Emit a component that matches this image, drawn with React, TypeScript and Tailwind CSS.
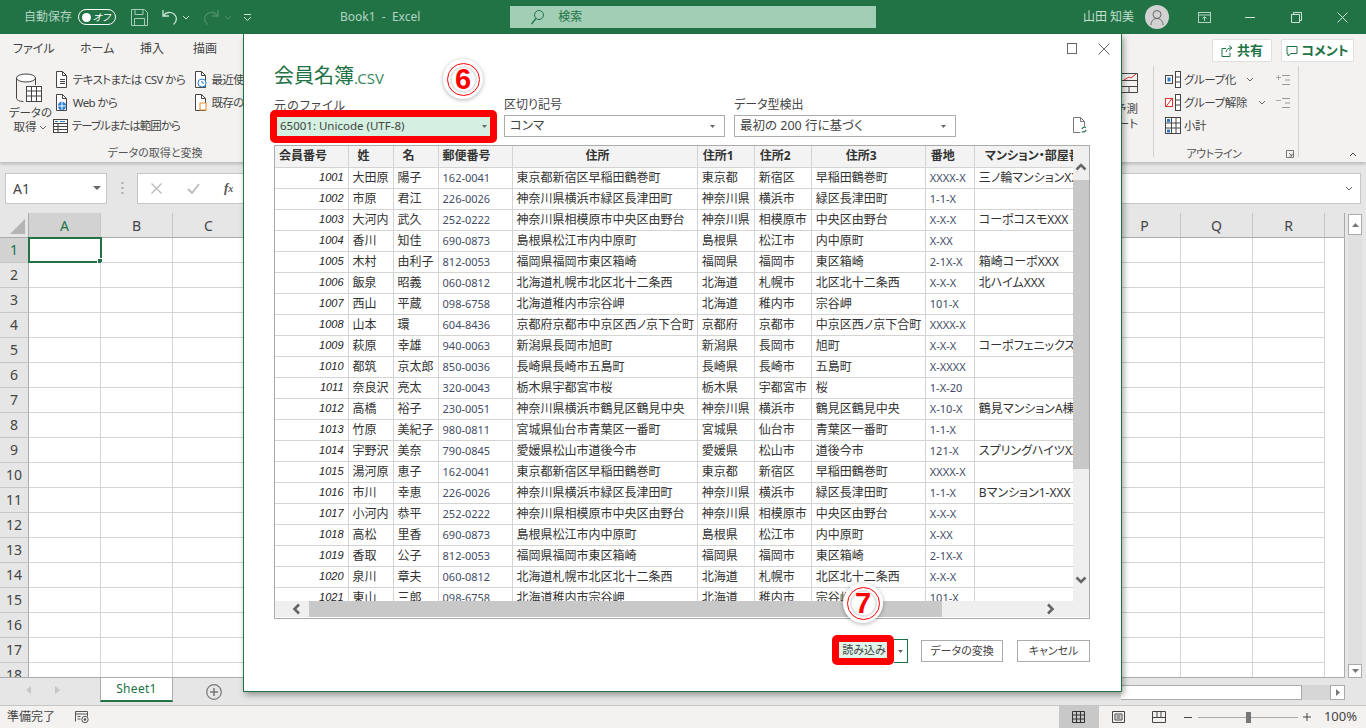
import React from "react";

const rows: string[][] = [
  ["1001","大田原","陽子","162-0041","東京都新宿区早稲田鶴巻町","東京都","新宿区","早稲田鶴巻町","XXXX-X","三ノ輪マンションXXX"],
  ["1002","市原","君江","226-0026","神奈川県横浜市緑区長津田町","神奈川県","横浜市","緑区長津田町","1-1-X",""],
  ["1003","大河内","武久","252-0222","神奈川県相模原市中央区由野台","神奈川県","相模原市","中央区由野台","X-X-X","コーポコスモXXX"],
  ["1004","香川","知佳","690-0873","島根県松江市内中原町","島根県","松江市","内中原町","X-XX",""],
  ["1005","木村","由利子","812-0053","福岡県福岡市東区箱崎","福岡県","福岡市","東区箱崎","2-1X-X","箱崎コーポXXX"],
  ["1006","飯泉","昭義","060-0812","北海道札幌市北区北十二条西","北海道","札幌市","北区北十二条西","X-X-X","北ハイムXXX"],
  ["1007","西山","平蔵","098-6758","北海道稚内市宗谷岬","北海道","稚内市","宗谷岬","101-X",""],
  ["1008","山本","環","604-8436","京都府京都市中京区西ノ京下合町","京都府","京都市","中京区西ノ京下合町","XXXX-X",""],
  ["1009","萩原","幸雄","940-0063","新潟県長岡市旭町","新潟県","長岡市","旭町","X-X-X","コーポフェニックスXX"],
  ["1010","都筑","京太郎","850-0036","長崎県長崎市五島町","長崎県","長崎市","五島町","X-XXXX",""],
  ["1011","奈良沢","亮太","320-0043","栃木県宇都宮市桜","栃木県","宇都宮市","桜","1-X-20",""],
  ["1012","高橋","裕子","230-0051","神奈川県横浜市鶴見区鶴見中央","神奈川県","横浜市","鶴見区鶴見中央","X-10-X","鶴見マンションA棟XX"],
  ["1013","竹原","美紀子","980-0811","宮城県仙台市青葉区一番町","宮城県","仙台市","青葉区一番町","1-1-X",""],
  ["1014","宇野沢","美奈","790-0845","愛媛県松山市道後今市","愛媛県","松山市","道後今市","121-X","スプリングハイツXX"],
  ["1015","湯河原","恵子","162-0041","東京都新宿区早稲田鶴巻町","東京都","新宿区","早稲田鶴巻町","XXXX-X",""],
  ["1016","市川","幸恵","226-0026","神奈川県横浜市緑区長津田町","神奈川県","横浜市","緑区長津田町","1-1-X","Bマンション1-XXX"],
  ["1017","小河内","恭平","252-0222","神奈川県相模原市中央区由野台","神奈川県","相模原市","中央区由野台","X-X-X",""],
  ["1018","高松","里香","690-0873","島根県松江市内中原町","島根県","松江市","内中原町","X-XX",""],
  ["1019","香取","公子","812-0053","福岡県福岡市東区箱崎","福岡県","福岡市","東区箱崎","2-1X-X",""],
  ["1020","泉川","章夫","060-0812","北海道札幌市北区北十二条西","北海道","札幌市","北区北十二条西","X-X-X",""],
  ["1021","東山","三郎","098-6758","北海道稚内市宗谷岬","北海道","稚内市","宗谷岬","101-X",""],
];
const heads = ["会員番号","姓","名","郵便番号","住所","住所1","住所2","住所3","番地","マンション・部屋番号"];
const headAlign = ["pl-[4px]","pl-[9px]","pl-[9px]","pl-[4px]","pl-[73px]","pl-[5px]","pl-[5px]","pl-[34px]","pl-[5px]","pl-[10px]"];
const colW = [73,45,45,74,185,57,57,114,49,100];
const letters = "ABCDEFGHIJKLMNOPQR".split("");

const Svg = ({ w, h, children, className }: { w: number; h: number; children: React.ReactNode; className?: string }) => (
  <svg width={w} height={h} viewBox={`0 0 ${w} ${h}`} fill="none" className={`shrink-0 ${className ?? ""}`}>{children}</svg>
);
const Chev = ({ c = "#666", dir = "down" }: { c?: string; dir?: string }) => (
  <Svg w={8} h={5}><path d={dir === "down" ? "M1 1l3 3 3-3" : "M1 4l3-3 3 3"} stroke={c} /></Svg>
);
const Tri = ({ c = "#666", w = 7, h = 4 }: { c?: string; w?: number; h?: number }) => (
  <Svg w={w} h={h}><path d={`M0 0h${w}L${w / 2} ${h}z`} fill={c} /></Svg>
);

const DocIcon = ({ children }: { children?: React.ReactNode }) => (
  <Svg w={15} h={17}>
    <path d="M1.5.5h6l4 4v12h-10z" stroke="#444" fill="#fff" />
    <path d="M7.5.5v4h4" stroke="#444" />
    {children}
  </Svg>
);

const GroupIcon = ({ kind }: { kind: "add" | "del" | "sub" }) => (
  <Svg w={16} h={17}>
    {kind !== "sub" && <rect x="0.5" y="4.5" width="7" height="8" stroke={kind === "del" ? "#e03030" : "#444"} fill="#fff" />}
    {kind !== "sub" && <rect x="10.5" y="0.5" width="5" height="16" stroke="#444" fill="#fff" />}
    {kind !== "sub" && <path d="M10.5 6h5M10.5 11h5" stroke="#444" />}
    {kind === "add" && <rect x="2.5" y="6.5" width="3" height="4" fill="#2b7cd3" />}
    {kind === "del" && <path d="M1.5 12l5-7" stroke="#e03030" />}
    {kind === "sub" && (
      <>
        <rect x="0.5" y="0.5" width="15" height="16" stroke="#444" fill="#fff" />
        <path d="M0.5 6h15M0.5 11h15M6.5.5v16M11 .5v16" stroke="#444" />
        <rect x="2" y="2" width="3" height="3" fill="#2b7cd3" />
        <rect x="2" y="12.5" width="3" height="3" fill="#2b7cd3" />
      </>
    )}
  </Svg>
);

const OutlineIcon = ({ plus }: { plus: boolean }) => (
  <Svg w={14} h={12}>
    <path d={plus ? "M0 3.5h5M2.5 1v5" : "M0 3.5h5"} stroke="#aaa" />
    <path d="M6 1.5h8M9 6h5M6 10.5h8" stroke="#999" />
  </Svg>
);

const Select = ({ text, w }: { text: string; w: number }) => (
  <div style={{ width: w }} className="h-[22px] border border-[#ababab] bg-white flex items-center justify-between pl-[5px] pr-[9px] text-[12.5px] text-[#444]">
    <span>{text}</span>
    <Tri w={5} h={3} />
  </div>
);

const Badge = ({ n, className }: { n: string; className: string }) => (
  <div className={`absolute w-[40px] h-[40px] rounded-full bg-white shadow-[0_1px_4px_rgba(0,0,0,0.3)] flex items-center justify-center ${className}`}>
    <div className="w-[33px] h-[33px] rounded-full border border-[#f00] flex items-center justify-center">
      <div className="w-[27px] h-[27px] rounded-full border-[2px] border-[#e4e4e4] flex items-center justify-center">
        <span className="font-['Liberation_Sans',sans-serif] font-bold text-[29px] leading-none text-[#f00]">{n}</span>
      </div>
    </div>
  </div>
);

const Table = () => (
  <div className="border border-[#ababab] h-[474px] flex flex-col bg-white">
    <div className="flex h-[455px]">
      <div className="w-[798px] overflow-hidden">
        <table className="table-fixed border-collapse w-[800px] text-[12px] text-[#333]">
          <colgroup>{colW.map((w, i) => <col key={i} style={{ width: w }} />)}</colgroup>
          <thead>
            <tr className="h-[21px] bg-[#f3f3f3]">
              {heads.map((h, i) => (
                <th key={i} className={`border border-[#d4d4d4] border-t-0 first:border-l-0 font-bold p-0 text-left whitespace-nowrap overflow-hidden text-[#333] leading-none ${headAlign[i]}`}>{h}</th>
              ))}
            </tr>
          </thead>
          <tbody>
            {rows.map((r) => (
              <tr key={r[0]} className="h-[21px]">
                {r.map((c, i) => (
                  <td key={i} className={`border border-[#d4d4d4] first:border-l-0 p-0 whitespace-nowrap overflow-hidden leading-none ${i === 0 ? "text-right pr-[4px] italic text-[11px] font-['Liberation_Sans',sans-serif] text-[#222]" : i === 3 ? "pl-[4px] text-[11px] text-[#3f4d66]" : i === 8 ? "pl-[4px] text-[11px] text-[#3f4d66]" : "pl-[4px]"}`}>{c}</td>
                ))}
              </tr>
            ))}
          </tbody>
        </table>
      </div>
      <div className="w-[16px] bg-[#efefef] flex flex-col items-center">
        <div className="h-[34px] w-full flex items-end justify-center pb-[9px]">
          <Svg w={12} h={8}><path d="M1.5 6.5l4.5-4.5 4.5 4.5" stroke="#666" strokeWidth="2.6" /></Svg>
        </div>
        <div className="h-[289px] w-full bg-[#c8c8c8]" />
        <div className="flex-1 w-full flex items-end justify-center pb-[17px]">
          <Svg w={12} h={8}><path d="M1.5 1.5l4.5 4.5 4.5-4.5" stroke="#666" strokeWidth="2.6" /></Svg>
        </div>
      </div>
    </div>
    <div className="flex h-[16px] bg-[#efefef]">
      <div className="w-[34px] flex items-center pl-[17px]">
        <Svg w={9} h={12}><path d="M7 1.5L2.5 6 7 10.5" stroke="#666" strokeWidth="2.6" /></Svg>
      </div>
      <div className="w-[633px] bg-[#c8c8c8]" />
      <div className="flex-1 flex items-center justify-end pr-[34px]">
        <Svg w={9} h={12}><path d="M2 1.5L6.5 6 2 10.5" stroke="#666" strokeWidth="2.6" /></Svg>
      </div>
    </div>
  </div>
);

const Dialog = () => (
  <div className="absolute left-[243px] top-[34px] w-[879px] h-[658px] bg-white border border-t-0 border-[#217346] shadow-[2px_3px_6px_rgba(0,0,0,0.35)] pl-[30px] pr-[31px] pt-[1px]">
    <div className="h-[27px] flex justify-end items-center gap-[21px] -mr-[20px]">
      <Svg w={10} h={11}><rect x="0.5" y="0.5" width="9" height="10" stroke="#666" /></Svg>
      <Svg w={12} h={12}><path d="M.5.5l11 11M11.5.5l-11 11" stroke="#666" /></Svg>
    </div>
    <div className="h-[24px] flex items-end text-[#217346] leading-none">
      <span className="text-[20px]">会員名簿</span>
      <span className="text-[15px] text-[#3f8a66]">.CSV</span>
    </div>
    <div className="mt-[11px] flex items-start">
      <div className="w-[222px]">
        <div className="h-[18px] text-[12px] tracking-[1.2px] text-[#444] leading-[17px]">元のファイル</div>
        <div className="relative h-[22px] bg-[#d3f0e0] flex items-center justify-between pl-[6px] pr-[9px] text-[11.5px] text-[#444]">
          <span>65001: Unicode (UTF-8)</span>
          <Tri w={5} h={3} />
          <div className="absolute -left-[4px] -right-[1px] -top-[5px] -bottom-[6px] border-[7px] border-[#f00] rounded-[5px]" />
        </div>
      </div>
      <div className="ml-[8px]">
        <div className="h-[18px] text-[12px] text-[#444] leading-[16px]">区切り記号</div>
        <Select text="コンマ" w={221} />
      </div>
      <div className="ml-[9px]">
        <div className="h-[18px] text-[12px] text-[#444] leading-[16px]">データ型検出</div>
        <Select text="最初の 200 行に基づく" w={222} />
      </div>
      <div className="ml-auto mr-[3px] mt-[20px]">
        <Svg w={15} h={17}>
          <path d="M1.5.5h7l4 4v5M1.5.5v15h7" stroke="#777" />
          <path d="M8.5.5v4h4" stroke="#777" />
          <path d="M10 12a2.6 2.6 0 0 1 4-1.4M14 13a2.6 2.6 0 0 1-4 1.4" stroke="#217346" strokeWidth="1.2" />
        </Svg>
      </div>
    </div>
    <div className="mt-[8px]"><Table /></div>
    <div className="mt-[21px] h-[22px] flex justify-end items-center text-[11px] text-[#444]">
      <div className="w-[62px] h-[30px] mb-[2px] border-[7px] border-[#f00] rounded-[5px] bg-[#def3ea] flex items-center justify-center whitespace-nowrap pl-[2px]">読み込み</div>
      <div className="w-[14px] h-[24px] border border-l-0 border-[#217346] flex items-center justify-center"><Tri w={5} h={3} /></div>
      <div className="ml-[13px] w-[82px] h-full border border-[#ababab] flex items-center justify-center">データの変換</div>
      <div className="ml-[14px] w-[73px] h-full border border-[#ababab] flex items-center justify-center">キャンセル</div>
    </div>
  </div>
);

const TitleBar = () => (
  <div className="h-[34px] bg-[#217346] flex items-center text-[#b3d4c2] text-[12px] shrink-0">
    <span className="ml-[24px] w-[54px]">自動保存</span>
    <div className="w-[38px] h-[16px] border border-white rounded-full flex items-center pl-[3px] justify-between pr-[5px]">
      <div className="w-[9px] h-[9px] rounded-full bg-white" />
      <span className="text-[10px] italic text-white leading-none">オフ</span>
    </div>
    <div className="ml-[15px]">
      <Svg w={17} h={17}>
        <path d="M.5.5h13l3 3v13H.5z" stroke="#a9cdb9" />
        <path d="M4 .5v5h8v-5M3.5 16.5v-7h10v7" stroke="#a9cdb9" />
      </Svg>
    </div>
    <div className="ml-[13px]">
      <Svg w={18} h={17}>
        <path d="M2 1v6h6" stroke="#cfe3d8" strokeWidth="1.3" />
        <path d="M2.5 6.5C5 3 9.5 2.5 13 5c3.5 3 3 7.5-.5 10.5" stroke="#cfe3d8" strokeWidth="1.3" />
      </Svg>
    </div>
    <div className="ml-[3px]"><Chev c="#cfe3d8" /></div>
    <div className="ml-[12px]">
      <Svg w={18} h={17}>
        <path d="M16 1v6h-6" stroke="#4f8f6d" strokeWidth="1.3" />
        <path d="M15.5 6.5C13 3 8.5 2.5 5 5c-3.5 3-3 7.5.5 10.5" stroke="#4f8f6d" strokeWidth="1.3" />
      </Svg>
    </div>
    <div className="ml-[4px]"><Chev c="#4f8f6d" /></div>
    <div className="ml-[11px]">
      <Svg w={9} h={7}><path d="M1 .5h7" stroke="#cfe3d8" /><path d="M1 3l3.5 3.5L8 3" stroke="#cfe3d8" /></Svg>
    </div>
    <span className="ml-[88px] text-[#b3d4c2] text-[12px] font-['Noto_Sans',sans-serif] whitespace-pre">Book1  -  Excel</span>
    <div className="ml-[90px] w-[366px] h-[22px] bg-[#a1ceb5] flex items-center text-[#217346]">
      <div className="ml-[20px]">
        <Svg w={15} h={16}><circle cx="9" cy="6" r="4.5" stroke="#217346" /><path d="M6 9.5L1.5 15" stroke="#217346" strokeWidth="1.2" /></Svg>
      </div>
      <span className="ml-[13px] text-[12px]">検索</span>
    </div>
    <div className="ml-auto flex items-center">
      <span className="text-[12px] text-[#c5dfd0] whitespace-pre">山田 知美</span>
      <div className="ml-[11px] w-[24px] h-[24px] rounded-full bg-[#d2d2d2] flex items-center justify-center">
        <Svg w={14} h={17}><circle cx="7" cy="5.5" r="4" stroke="#666" /><path d="M1 16c0-4 2.5-6.5 6-6.5s6 2.5 6 6.5" stroke="#666" /></Svg>
      </div>
      <div className="ml-[29px]">
        <Svg w={13} h={11}><rect x=".5" y=".5" width="12" height="10" stroke="#b3d4c2" /><path d="M.5 3h12M6.5 9V5M4.5 6.5l2-2 2 2" stroke="#b3d4c2" /></Svg>
      </div>
      <div className="ml-[34px]"><Svg w={10} h={3}><path d="M0 1.5h10" stroke="#cfe3d8" /></Svg></div>
      <div className="ml-[36px]"><Svg w={11} h={11}><path d="M.5 2.5h8v8h-8zM2.5 2.5v-2h8v8h-2" stroke="#cfe3d8" /></Svg></div>
      <div className="ml-[35px] mr-[18px]"><Svg w={11} h={11}><path d="M.5.5l10 10M10.5.5l-10 10" stroke="#cfe3d8" /></Svg></div>
    </div>
  </div>
);

const Ribbon = () => (
  <div className="h-[128px] bg-[#f3f2f1] shrink-0 shadow-[0_2px_3px_rgba(0,0,0,0.2)] relative flex flex-col text-[#444]">
    <div className="h-[30px] flex items-center text-[12px] text-[#444] relative">
      <span className="ml-[13px] w-[67px]">ファイル</span>
      <span className="w-[60px]">ホーム</span>
      <span className="w-[53px]">挿入</span>
      <span>描画</span>
      <div className="ml-auto flex items-center gap-[9px] mr-[12px] mt-[3px]">
        <div className="w-[60px] h-[23px] bg-white border border-[#e1dfdd] rounded-[2px] flex items-center justify-center gap-[4px] font-bold text-[13px] text-[#217346]">
          <Svg w={12} h={12}><path d="M1 3.5h4M1 3.5v8h8v-4M5 7c.5-2.5 2-4 5-4M8 .5l3 2.5-3 2.5" stroke="#217346" /></Svg>共有
        </div>
        <div className="w-[73px] h-[23px] bg-white border border-[#e1dfdd] rounded-[2px] flex items-center justify-center gap-[3px] font-bold text-[13px] text-[#217346]">
          <Svg w={12} h={12}><path d="M1 1.5h10v7H5l-3 2.5v-2.5H1z" stroke="#217346" /></Svg>コメント
        </div>
      </div>
    </div>
    <div className="flex-1 flex justify-between">
      <div className="w-[243px] flex flex-col h-[98px]">
        <div className="flex h-[80px] text-[11.5px] tracking-[-0.6px]">
          <div className="ml-[6px] w-[50px] pt-[9px] flex flex-col items-center">
            <Svg w={30} h={30}>
              <path d="M1.5 5v20c0 2 3 3.5 7 3.5" stroke="#444" />
              <ellipse cx="11" cy="5" rx="9.5" ry="4" stroke="#444" fill="#fff" />
              <path d="M20.5 5v7" stroke="#444" />
              <rect x="11.5" y="13.5" width="15" height="15" stroke="#444" fill="#fff" />
              <path d="M11.5 18h15M11.5 23h15M16.5 13.5v15M21.5 13.5v15" stroke="#444" />
            </Svg>
            <span className="leading-[14px] mt-[3px] tracking-normal">データの</span>
            <span className="leading-[14px] flex items-center gap-[3px] tracking-normal">取得 <Chev /></span>
          </div>
          <div className="pt-[4px] flex flex-col w-[143px]">
            <div className="flex items-center gap-[3px] h-[23px]"><DocIcon><path d="M5 8.5h5M5 10.5h5M5 12.5h5" stroke="#444" /></DocIcon><span className="whitespace-nowrap">テキストまたは CSV から</span></div>
            <div className="flex items-center gap-[3px] h-[23px]"><DocIcon><circle cx="7" cy="12" r="4.2" fill="#2b7cd3" /><path d="M3 12h8M7 8v8" stroke="#fff" /></DocIcon><span className="whitespace-nowrap">Web から</span></div>
            <div className="flex items-center gap-[4px] h-[23px] -ml-[2px] tracking-[-1px]">
              <Svg w={15} h={14}><rect x=".5" y=".5" width="14" height="13" stroke="#444" fill="#fff" /><path d="M.5 4.5h14M.5 7.5h14M.5 10.5h14M5 4.5v9" stroke="#444" /><path d="M2 2.5h3M7 2.5h5" stroke="#2b7cd3" /></Svg>
              <span className="whitespace-nowrap">テーブルまたは範囲から</span>
            </div>
          </div>
          <div className="pt-[4px] flex flex-col overflow-hidden">
            <div className="flex items-center gap-[2px] h-[23px]"><DocIcon><circle cx="8" cy="12" r="4" fill="#fff" stroke="#2b7cd3" /><path d="M8 10v2h2" stroke="#2b7cd3" /></DocIcon><span className="whitespace-nowrap">最近使</span></div>
            <div className="flex items-center gap-[2px] h-[23px]"><DocIcon><rect x="6" y="9" width="6" height="7" fill="#fff" stroke="#e68a2e" /></DocIcon><span className="whitespace-nowrap">既存の</span></div>
          </div>
        </div>
        <div className="h-[18px] mt-auto text-center text-[11px] leading-[18px] text-[#555] pl-[67px]">データの取得と変換</div>
      </div>
      <div className="flex h-[98px] relative">
        <div className="w-[32px] flex flex-col text-[11.5px] leading-[15px] items-end pr-[15px]">
          <Svg w={17} h={20} className="mt-[9px] mb-[8px] shrink-0"><path d="M0 .5h16.5v19H0M0 7.5h16.5M0 13.5h16.5M8 13.5v6" stroke="#444" /><path d="M3 7l5-3 2 1 5-4" stroke="#e03030" /></Svg>
          <span className="whitespace-nowrap">予測</span>
          <span className="whitespace-nowrap">ート</span>
        </div>
        <div className="w-[145px] border-l border-[#d2d0ce] h-[91px] mt-[2px] text-[11.5px] tracking-[-0.4px] pl-[11px] pt-[2px] relative">
          <div className="flex items-center h-[23px] gap-[3px] whitespace-nowrap"><GroupIcon kind="add" /><span className="w-[59px]">グループ化</span><Chev /><div className="ml-[19px]"><OutlineIcon plus /></div></div>
          <div className="flex items-center h-[23px] gap-[3px] whitespace-nowrap"><GroupIcon kind="del" /><span className="w-[71px]">グループ解除</span><Chev /><div className="ml-[7px]"><OutlineIcon plus={false} /></div></div>
          <div className="flex items-center h-[23px] gap-[3px] whitespace-nowrap"><GroupIcon kind="sub" />小計</div>
          <div className="absolute left-0 right-0 bottom-[-5px] flex justify-center pr-[24px] text-[11px] leading-[16px] text-[#555]">アウトライン</div>
          <div className="absolute right-[4px] bottom-[-1px]"><Svg w={8} h={8}><path d="M.5 7.5v-7h7v7zM3 3l3 3M6 3.5V6H3.5" stroke="#777" /></Svg></div>
        </div>
        <div className="w-[68px] border-l border-[#d2d0ce] h-[91px] mt-[2px] flex items-end justify-end pr-[9px]">
          <Chev c="#444" dir="up" />
        </div>
      </div>
    </div>
  </div>
);

const FormulaBar = () => (
  <div className="h-[51px] bg-[#e6e6e6] shrink-0 flex items-center pl-[5px] pr-[5px] pb-[8px] pt-[9px]">
    <div className="w-[102px] h-[31px] bg-white border border-[#c6c6c6] flex items-center justify-between pl-[7px] pr-[5px] text-[14px] text-[#444]">
      <span>A1</span><Tri w={8} h={4} c="#666" />
    </div>
    <div className="w-[30px] flex justify-center">
      <Svg w={3} h={14}><path d="M1.5 1v2M1.5 6v2M1.5 11v2" stroke="#aaa" strokeWidth="2" /></Svg>
    </div>
    <div className="flex-1 h-[31px] bg-white border border-[#c6c6c6] flex items-center pl-[13px] pr-[5px]">
      <Svg w={11} h={11}><path d="M.5.5l10 10M10.5.5l-10 10" stroke="#bbb" strokeWidth="1.4" /></Svg>
      <div className="ml-[25px]"><Svg w={13} h={11}><path d="M1 6l4 4 7-9" stroke="#bbb" strokeWidth="1.8" /></Svg></div>
      <span className="ml-[24px] font-['Liberation_Serif',serif] italic font-bold text-[13px] text-[#555]">f<span className="text-[10px]">x</span></span>
      <div className="ml-auto mr-[2px]"><Chev /></div>
    </div>
  </div>
);

const Grid = () => (
  <div className="h-[465px] shrink-0 bg-[#e6e6e6] flex overflow-hidden">
    <div className="w-[1345px] h-[465px] bg-white overflow-hidden border-b border-r border-[#ababab]">
      <div className="flex h-[25px] bg-[#e6e6e6] border-b border-[#ababab]">
        <div className="w-[29px] shrink-0 flex items-end justify-end pr-[3px] pb-[3px] border-r border-[#ababab]">
          <Svg w={15} h={15}><path d="M15 0v15H0z" fill="#b4b4b4" /></Svg>
        </div>
        {letters.map((l, i) => (
          <div key={l} className={`w-[72px] shrink-0 flex items-center justify-center text-[14px] border-r border-[#c6c6c6] ${i === 0 ? "bg-[#d2d2d2] text-[#217346]" : "text-[#444]"}`}>{l}</div>
        ))}
      </div>
      {Array.from({ length: 18 }, (_, r) => (
        <div key={r} className="flex h-[25px]">
          <div className={`w-[29px] shrink-0 border-r border-[#ababab] border-b border-b-[#c6c6c6] flex items-center justify-center pb-[2px] text-[14px] ${r === 0 ? "bg-[#d2d2d2] text-[#217346]" : "bg-[#e6e6e6] text-[#444]"}`}>{r + 1}</div>
          {letters.map((l, i) => (
            <div key={l} className="relative w-[72px] shrink-0 border-r border-b border-[#d4d4d4]">
              {r === 0 && i === 0 && (
                <div className="absolute -left-[1px] -top-[1px] w-[74px] h-[26px] border-2 border-[#217346]">
                  <div className="absolute -right-[3px] -bottom-[3px] w-[6px] h-[6px] bg-[#217346] border border-white" />
                </div>
              )}
            </div>
          ))}
        </div>
      ))}
    </div>
    <div className="ml-[3px] w-[14px] h-[464px] mt-[1px] bg-[#e0e0e0] flex flex-col">
      <div className="h-[21px] bg-white border border-[#ababab] flex items-center justify-center"><Svg w={7} h={4}><path d="M0 4h7L3.5 0z" fill="#777" /></Svg></div>
      <div className="h-[14px] mt-auto bg-white border border-[#ababab] flex items-center justify-center"><Tri w={7} h={4} c="#777" /></div>
    </div>
  </div>
);

const TabsBar = () => (
  <div className="h-[28px] bg-[#e6e6e6] shrink-0 border-b border-[#c6c6c6] flex items-start text-[13px] relative">
    <div className="w-[100px] h-[24px] flex items-center pl-[26px] gap-[24px]">
      <Svg w={5} h={8}><path d="M5 0v8L0 4z" fill="#c6c6c6" /></Svg>
      <Svg w={5} h={8}><path d="M0 0v8l5-4z" fill="#c6c6c6" /></Svg>
    </div>
    <div className="w-[73px] h-[24px] bg-white border-x border-[#ababab] border-b-2 border-b-[#217346] flex items-center justify-center text-[#217346] text-[12px] tracking-wide">Sheet1</div>
    <div className="ml-[33px] mt-[6px]">
      <Svg w={16} h={16}><circle cx="8" cy="8" r="7.3" stroke="#777" strokeWidth="1.2" /><path d="M8 4v8M4 8h8" stroke="#777" strokeWidth="1.5" /></Svg>
    </div>
    <div className="ml-auto mt-[7px] mr-[21px] flex h-[15px]">
      <div className="w-[181px] bg-white border border-[#ababab] border-l-0" />
      <div className="w-[28px] bg-[#d6d6d6]" />
      <div className="w-[15px] bg-white border border-[#ababab] flex items-center justify-center"><Svg w={4} h={7}><path d="M0 0v7l4-3.5z" fill="#777" /></Svg></div>
    </div>
  </div>
);

const StatusBar = () => (
  <div className="h-[22px] shrink-0 bg-[#f3f2f1] flex items-center text-[12px] text-[#444]">
    <span className="ml-[7px]">準備完了</span>
    <div className="ml-[20px]">
      <Svg w={14} h={12}><path d="M.5 10.5v-10h12v5M.5 3h12M2.5 5.5h3M2.5 8h3" stroke="#555" /><circle cx="10" cy="8.5" r="3.2" stroke="#555" /><circle cx="10" cy="8.5" r="1.3" fill="#555" /></Svg>
    </div>
    <div className="ml-auto w-[40px] h-full bg-[#c8c8c8] flex items-center justify-center">
      <Svg w={13} h={12}><path d="M.5.5h12v11H.5zM4.5.5v11M8.5.5v11M.5 4h12M.5 8h12" stroke="#333" /></Svg>
    </div>
    <div className="ml-[13px]">
      <Svg w={13} h={12}><path d="M.5.5h12v11H.5z" stroke="#444" /><path d="M3 3h7v6H3zM4.5 5h4M4.5 7h4" stroke="#444" /></Svg>
    </div>
    <div className="ml-[27px]">
      <Svg w={14} h={12}><path d="M.5.5h13v11H.5zM5 .5v6h4v-6M.5 6.5h13" stroke="#444" /></Svg>
    </div>
    <div className="ml-[18px]"><Svg w={8} h={3}><path d="M0 1.5h8" stroke="#444" /></Svg></div>
    <div className="ml-[6px] w-[100px] h-[1px] bg-[#aaa] relative">
      <div className="absolute left-[48px] -top-[5px] w-[5px] h-[11px] bg-[#777]" />
    </div>
    <div className="ml-[5px]"><Svg w={8} h={8}><path d="M0 4h8M4 0v8" stroke="#444" /></Svg></div>
    <span className="ml-[13px] mr-[9px] text-[13px] font-['Noto_Sans',sans-serif]">100%</span>
  </div>
);

export default function App() {
  return (
    <div className="relative w-[1366px] h-[728px] overflow-hidden flex flex-col bg-[#e6e6e6] font-['Noto_Sans','Noto_Sans_CJK_JP',sans-serif] [font-feature-settings:'palt']">
      <TitleBar />
      <Ribbon />
      <FormulaBar />
      <Grid />
      <TabsBar />
      <StatusBar />
      <Dialog />
      <Badge n="6" className="left-[443px] top-[59px]" />
      <Badge n="7" className="left-[843px] top-[583px]" />
    </div>
  );
}
